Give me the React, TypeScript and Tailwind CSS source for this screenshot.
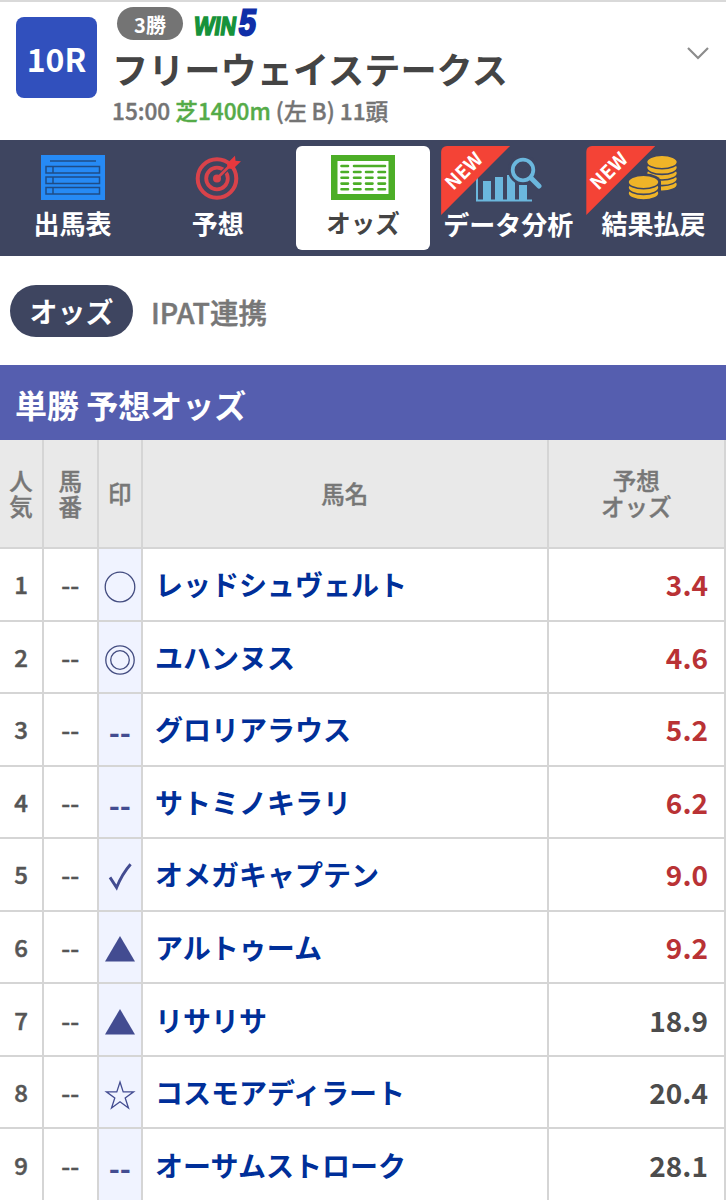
import type { ReactNode } from "react";

const rows = [
  { rank: 1, mark: "circle", name: "レッドシュヴェルト", odds: "3.4" },
  { rank: 2, mark: "double", name: "ユハンヌス", odds: "4.6" },
  { rank: 3, mark: "none", name: "グロリアラウス", odds: "5.2" },
  { rank: 4, mark: "none", name: "サトミノキラリ", odds: "6.2" },
  { rank: 5, mark: "check", name: "オメガキャプテン", odds: "9.0" },
  { rank: 6, mark: "triangle", name: "アルトゥーム", odds: "9.2" },
  { rank: 7, mark: "triangle", name: "リサリサ", odds: "18.9" },
  { rank: 8, mark: "star", name: "コスモアディラート", odds: "20.4" },
  { rank: 9, mark: "none", name: "オーサムストローク", odds: "28.1" },
];

const Mark = ({ type }: { type: string }) => {
  if (type === "none") {
    return <span className="pb-0.5 text-[30px] leading-none font-bold text-[#434c91]">--</span>;
  }
  return (
    <svg width="32" height="32" viewBox="0 0 32 32" fill="none" stroke="#434c80" strokeWidth="1.3">
      {type === "circle" && <circle cx="16" cy="16" r="14.8" />}
      {type === "double" && (
        <>
          <circle cx="16" cy="16" r="14.2" />
          <circle cx="16" cy="16" r="9.3" />
        </>
      )}
      {type === "check" && (
        <path d="M6 16.4L12.6 26.5Q18 13 26.6 3.2" stroke="#434c91" strokeWidth="2.9" />
      )}
      {type === "triangle" && <path d="M16 2L31 27.5H1z" fill="#434c91" stroke="none" />}
      {type === "star" && (
        <path
          d="M16 3L19.2 12.9L29.6 12.9L21.2 19L24.5 29L16 22.8L7.5 29L10.8 19L2.4 12.9L12.8 12.9z"
          stroke="#434c91"
        />
      )}
    </svg>
  );
};

const EntryIcon = () => (
  <svg width="64" height="45" viewBox="0 0 64 45" fill="none" stroke="#1f4c86" strokeWidth="1.5">
    <path d="M0 0h64v45H0z" fill="#268af5" stroke="none" />
    <path d="M9 6h46" />
    {[11.5, 22, 32.5].map((y) => (
      <g key={y}>
        <rect x="5" y={y} width="53.5" height="6.5" />
        <path d={`M12 ${y}v6.5`} />
      </g>
    ))}
  </svg>
);

const TargetIcon = () => (
  <svg width="46" height="45" viewBox="0 0 46 45" fill="none" stroke="#d8424a">
    <circle cx="22" cy="23.5" r="19.3" strokeWidth="4" />
    <circle cx="22" cy="23.5" r="10.8" strokeWidth="3.8" />
    <circle cx="22" cy="23.5" r="4" fill="#d8424a" stroke="none" />
    <path d="M25 20.5L37 8.5" stroke="#3e4560" strokeWidth="5" />
    <path d="M22 23.5L39 6.5" strokeWidth="2.6" />
    <path d="M32 8.5L40 .8L40.5 5.8L46 6.3L38 14L32.5 13.5z" fill="#e8383d" stroke="none" />
  </svg>
);

const OddsIcon = () => (
  <svg width="64" height="45" viewBox="0 0 64 45" fill="none" stroke="#4cae27">
    <path d="M0 0h64v45H0z" fill="#4cae27" stroke="none" />
    <path d="M6.5 6h51v33h-51z" fill="#fff" stroke="none" />
    <g strokeWidth="2.6" strokeLinecap="round">
      <path d="M10.5 11h6.5M23 11h31" />
      {[17, 22.8, 28.6, 34.2].map((y) => (
        <path key={y} d={`M10.5 ${y}h6.5M23 ${y}h6.5M35 ${y}h6.5M47.5 ${y}h6.5`} />
      ))}
    </g>
  </svg>
);

const ChartIcon = () => (
  <svg width="66" height="46" viewBox="0 0 66 46" fill="none" stroke="#6bb7dd">
    <path d="M1 14v29.5h55" strokeWidth="2" />
    <path d="M7 24h8v20H7zM19 20h8v24h-8zM31 18h8v26h-8zM43 28h8v16h-8z" fill="#6bb7dd" stroke="none" />
    <circle cx="47" cy="13" r="15" fill="#3e4560" stroke="none" />
    <path d="M47 13L65 31" stroke="#3e4560" strokeWidth="8" />
    <circle cx="47" cy="13" r="10.3" strokeWidth="3.8" />
    <path d="M55 21L63 29" strokeWidth="5" strokeLinecap="round" />
  </svg>
);

const Coins = ({ x, y, n }: { x: number; y: number; n: number }) => (
  <g fill="#efb428" stroke="#3e4560" strokeWidth="1.6">
    {Array.from({ length: n }, (_, i) => n - 1 - i).map((i) => (
      <ellipse key={i} cx={x} cy={y + i * 5.6} rx="15.5" ry="6.8" />
    ))}
  </g>
);

const CoinIcon = () => (
  <svg width="50" height="46" viewBox="0 0 50 46">
    <Coins x={34} y={7} n={5} />
    <path d="M0 27a16.5 8.5 0 0 1 33 0v12H0z" fill="#3e4560" />
    <Coins x={15.5} y={27} n={3} />
  </svg>
);

const tabs: { label: string; icon: ReactNode; active?: boolean; isNew?: boolean }[] = [
  { label: "出馬表", icon: <EntryIcon /> },
  { label: "予想", icon: <TargetIcon /> },
  { label: "オッズ", icon: <OddsIcon />, active: true },
  { label: "データ分析", icon: <div className="pt-0.5 pl-[1px]"><ChartIcon /></div>, isNew: true },
  { label: "結果払戻", icon: <CoinIcon />, isNew: true },
];

const App = () => {
  return (
    <div className="h-[1200px] w-full overflow-hidden bg-white font-['Noto_Sans_CJK_JP',sans-serif] text-[#444]">
      {/* Race header */}
      <header className="flex h-[140px] border-t-2 border-[#d9d9d9] pl-4">
        <div className="mt-[15px] flex h-[81px] w-[81px] shrink-0 items-center justify-center rounded-lg bg-[#3150bd] text-[32px] leading-none font-bold text-white">
          10R
        </div>
        <div className="ml-[15px] flex-1">
          <div className="flex items-center pt-[5px] pl-[5px]">
            <span className="flex h-[33px] w-[66px] items-center justify-center rounded-full bg-[#747474] pt-0.5 text-[20px] leading-none font-bold text-white">
              3勝
            </span>
            <svg className="ml-2 overflow-visible" width="70" height="33" viewBox="0 0 70 33">
              <g fontFamily="Liberation Sans" fontWeight="700">
                <text transform="translate(2 28) skewX(-8)" fontSize="26" textLength="42" lengthAdjust="spacingAndGlyphs" fill="#16923a" stroke="#16923a" strokeWidth="1.6">WIN</text>
                <text transform="translate(46.5 28) skewX(-8)" fontSize="37" textLength="17" lengthAdjust="spacingAndGlyphs" fill="#102fa8" stroke="#102fa8" strokeWidth="2.2">5</text>
              </g>
            </svg>
          </div>
          <h1 className="mt-[2px] text-[36.2px] leading-[52px] font-bold">フリーウェイステークス</h1>
          <p className="text-[22.6px] leading-[33px] font-medium whitespace-nowrap text-[#747474] [-webkit-text-stroke:0.4px]">
            15:00 <span className="text-[#55ab48]">芝1400m</span> (左 B) 11頭
          </p>
        </div>
        <svg className="mt-11 mr-4" width="24" height="16" viewBox="0 0 24 16" fill="none" stroke="#8c8c8c" strokeWidth="2.2">
          <path d="M2 2L12 12L22 2" />
        </svg>
      </header>

      {/* Tabs */}
      <nav className="flex h-[116px] bg-[#3e4560] py-1.5">
        {tabs.map((tab) => (
          <div key={tab.label} className="h-[104px] flex-1 px-[5.5px]">
            <div
              className={`relative flex h-full flex-col items-center rounded-md pt-[9px] leading-[38px] font-bold whitespace-nowrap ${
                tab.active ? "bg-white text-[24.5px] text-[#444]" : "text-[26px] text-white"
              }`}
            >
              {tab.isNew && (
                <div className="absolute top-0 left-0 h-[69px] w-[69px]">
                  <div className="h-full w-full rounded-tl-md bg-[#f44336] [clip-path:polygon(0_0,100%_0,0_100%)]" />
                  <span className="absolute top-[14px] -left-[8px] w-[60px] -rotate-45 text-center text-[19px] leading-[20px]">NEW</span>
                </div>
              )}
              <div className="h-[49px]">{tab.icon}</div>
              <span className={tab.label === "データ分析" ? "relative mt-px" : "relative"}>{tab.label}</span>
            </div>
          </div>
        ))}
      </nav>

      {/* Sub menu */}
      <div className="flex h-[109px] items-center pl-2.5 text-[28px] leading-none">
        <span className="flex h-[52px] w-[123px] items-center justify-center rounded-full bg-[#3e4560] font-bold text-white">オッズ</span>
        <span className="ml-[18px] pt-[3px] text-[28.5px] font-medium text-[#777] [-webkit-text-stroke:0.5px]">IPAT連携</span>
      </div>

      <h2 className="flex h-[75px] items-center bg-[#555eaf] pt-0.5 pl-[15px] text-[32px] leading-none font-bold text-white">
        単勝 予想オッズ
      </h2>

      {/* Odds table */}
      <table className="w-full table-fixed border-separate border-spacing-0">
        <colgroup>
          <col className="w-[44px]" />
          <col className="w-[54.5px]" />
          <col className="w-[44.5px]" />
          <col className="w-[405.5px]" />
          <col />
        </colgroup>
        <thead>
          <tr className="h-[109px] bg-[#e9e9e9] text-[23.5px] leading-[26px] text-[#777] *:border-r-2 *:border-b-2 *:border-[#d5d5d5] *:p-0 *:pb-0.5 *:font-medium *:[-webkit-text-stroke:0.4px]">
            <th>人<br />気</th>
            <th>馬<br />番</th>
            <th>印</th>
            <th>馬名</th>
            <th>予想<br />オッズ</th>
          </tr>
        </thead>
        <tbody>
          {rows.map((row) => (
            <tr key={row.rank} className="h-[72.55px] leading-[36px] *:border-r-2 *:border-b-2 *:border-[#d5d5d5] *:p-0">
              <td className="text-center text-[24px] font-medium text-[#555] [-webkit-text-stroke:0.5px]">{row.rank}</td>
              <td className="text-center text-[25px] font-medium text-[#555] [-webkit-text-stroke:0.5px]">--</td>
              <td className="bg-[#f0f3ff]">
                <div className="flex h-9 items-center justify-center pt-1.5"><Mark type={row.mark} /></div>
              </td>
              <td>
                <a href="#" className="block pl-3 text-[28px] font-bold whitespace-nowrap text-[#002f99]">{row.name}</a>
              </td>
              <td>
                <div className={`pr-4 text-right text-[28px] font-bold ${Number(row.odds) < 10 ? "text-[#b93235]" : "text-[#4c4c4c]"}`}>{row.odds}</div>
              </td>
            </tr>
          ))}
        </tbody>
      </table>
    </div>
  );
};

export default App;
